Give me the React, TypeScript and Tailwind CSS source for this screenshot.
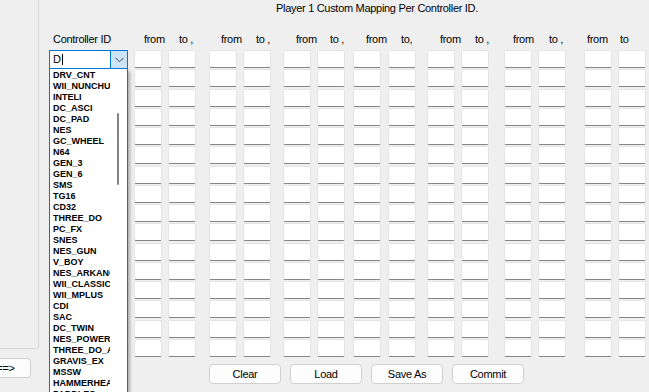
import React from 'react';

const controllers = [
  'DRV_CNT', 'WII_NUNCHUK', 'INTELI', 'DC_ASCI', 'DC_PAD', 'NES', 'GC_WHEEL', 'N64',
  'GEN_3', 'GEN_6', 'SMS', 'TG16', 'CD32', 'THREE_DO', 'PC_FX', 'SNES', 'NES_GUN',
  'V_BOY', 'NES_ARKANOID', 'WII_CLASSIC', 'WII_MPLUS', 'CDI', 'SAC', 'DC_TWIN',
  'NES_POWERPAD', 'THREE_DO_ARCADE', 'GRAVIS_EX', 'MSSW', 'HAMMERHEAD', 'PADDLES',
];

// column spacing and header offsets read off the form
const columns = [
  { label: 'from', ml: 'ml-[6px]', pl: 'pl-[10px]' },
  { label: 'to ,', ml: 'ml-[6px]', pl: 'pl-[11px]' },
  { label: 'from', ml: 'ml-[13px]', pl: 'pl-[12px]' },
  { label: 'to ,', ml: 'ml-[6px]', pl: 'pl-[13px]' },
  { label: 'from', ml: 'ml-[12px]', pl: 'pl-[13px]' },
  { label: 'to ,', ml: 'ml-[6px]', pl: 'pl-[13px]' },
  { label: 'from', ml: 'ml-[8px]', pl: 'pl-[13px]' },
  { label: 'to,', ml: 'ml-[7px]', pl: 'pl-[13px]' },
  { label: 'from', ml: 'ml-[11px]', pl: 'pl-[13px]' },
  { label: 'to ,', ml: 'ml-[6px]', pl: 'pl-[14px]' },
  { label: 'from', ml: 'ml-[15px]', pl: 'pl-[9px]' },
  { label: 'to ,', ml: 'ml-[6px]', pl: 'pl-[11px]' },
  { label: 'from', ml: 'ml-[18px]', pl: 'pl-[3px]' },
  { label: 'to', ml: 'ml-[6px]', pl: 'pl-[2px]' },
];

const rows = Array.from({ length: 16 }, (_, i) => i);

const Field: React.FC = () => (
  <div className="h-[18px] w-[28px] bg-white border border-[#e4e4e4] border-b-[#858585] rounded-[2px]" />
);

const WinButton: React.FC<{ label: string; className?: string }> = ({ label, className }) => (
  <button className={`h-[20px] bg-[#fdfdfd] border border-[#d0d0d0] rounded-[4px] text-[11px] tracking-[-0.3px] text-black leading-none ${className ?? ''}`}>
    {label}
  </button>
);

const App: React.FC = () => {
  return (
    <div className="w-[649px] h-[392px] overflow-hidden bg-[#efefef] flex font-['Liberation_Sans',Arial,sans-serif] text-black">
      {/* left group box + arrow button */}
      <div className="w-[39px] shrink-0 flex flex-col">
        <div className="h-[349px] border-r border-b border-[#d9d9d9] rounded-br-[3px]" />
        <WinButton label="==>" className="mt-[9px] ml-[-20px] w-[51px]" />
      </div>

      <div className="flex-1 flex flex-col">
        {/* title */}
        <div className="h-[33px] pt-[2px] pl-[237px] text-[11px] leading-[13px] tracking-[-0.3px] whitespace-nowrap">
          Player 1 Custom Mapping Per Controller ID.
        </div>

        <div className="flex">
          {/* controller id combo */}
          <div className="ml-[10px] w-[79px] flex flex-col">
            <div className="h-[13px] pl-[4px] text-[11px] leading-[13px] tracking-[-0.3px] whitespace-nowrap">Controller ID</div>
            <div className="relative mt-[4px] h-[19px] bg-white border border-[#0078d7] flex">
              <div className="flex-1 flex items-center pl-[3px] text-[11px] leading-none">
                D<span className="ml-[1px] w-px h-[11px] bg-black" />
              </div>
              <div className="w-[17px] bg-[#cce4f7] border-l border-[#0078d7] flex items-center justify-center">
                <svg width="9" height="6" viewBox="0 0 9 6">
                  <path d="M0.5 0.8 L4.5 4.8 L8.5 0.8" fill="none" stroke="#404040" strokeWidth="1" />
                </svg>
              </div>

              {/* open drop-down list */}
              <div className="absolute left-[-1px] top-[18px] w-[79px] h-[340px] bg-white border-x border-[#0078d7] shadow-[2px_2px_3px_rgba(0,0,0,0.28)] z-10">
                <div className="w-[60px] overflow-hidden pl-[3px] pt-[1px]">
                  {controllers.map(c => (
                    <div key={c} className="h-[11px] text-[9px] leading-[11px] font-bold whitespace-nowrap">{c}</div>
                  ))}
                </div>
                <div className="absolute left-[67px] top-[44px] w-[2px] h-[72px] bg-[#858585] rounded-full" />
              </div>
            </div>
          </div>

          {/* from / to grid */}
          {columns.map((col, i) => (
            <div key={i} className={`w-[28px] flex flex-col ${col.ml}`}>
              <div className={`h-[13px] text-[11px] leading-[13px] tracking-[-0.3px] whitespace-nowrap ${col.pl}`}>{col.label}</div>
              <div className="mt-[4px] h-[307px] flex flex-col justify-between">
                {rows.map(r => <Field key={r} />)}
              </div>
            </div>
          ))}
        </div>

        {/* bottom buttons */}
        <div className="mt-[7px] pl-[170px] flex gap-[9px]">
          <WinButton label="Clear" className="w-[72px]" />
          <WinButton label="Load" className="w-[72px]" />
          <WinButton label="Save As" className="w-[72px]" />
          <WinButton label="Commit" className="w-[72px]" />
        </div>
      </div>
    </div>
  );
};

export default App;
